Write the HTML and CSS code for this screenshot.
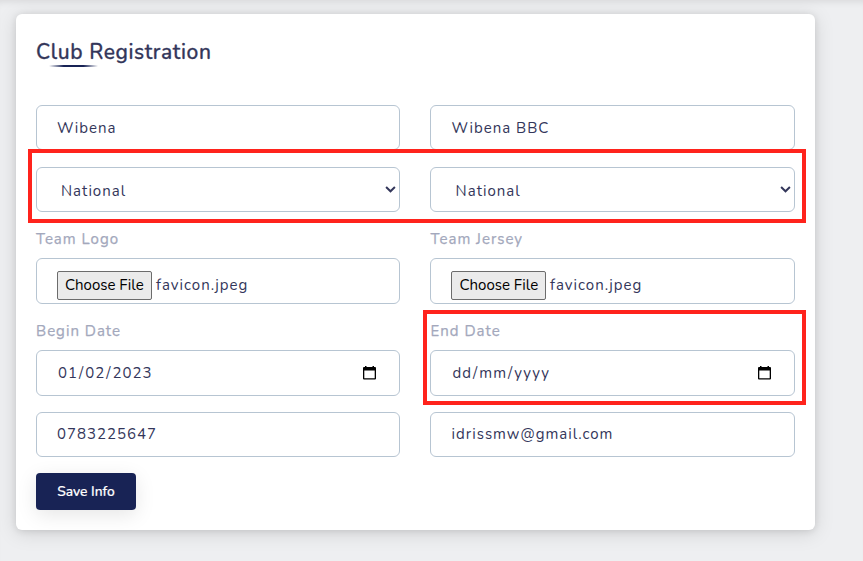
FILE: index.html
```html
<!DOCTYPE html>
<html lang="en">
<head>
<meta charset="utf-8">
<title>Club Registration</title>
<link rel="stylesheet" href="styles.css">
</head>
<body>
<main class="card">
  <h1 class="title">Club Registration</h1>
  <form class="form">
    <div class="row names">
      <div class="field">Wibena</div>
      <div class="field">Wibena BBC</div>
    </div>
    <div class="row selects">
      <div class="field select"><span>National</span><svg class="chevron" viewBox="0 0 10 6"><path d="M1 .8 5 4.6 9 .8"/></svg></div>
      <div class="field select"><span>National</span><svg class="chevron" viewBox="0 0 10 6"><path d="M1 .8 5 4.6 9 .8"/></svg></div>
      <i class="mark mark-selects"></i>
    </div>
    <div class="row group">
      <div>
        <div class="label">Team Logo</div>
        <div class="field tall file"><span class="choose">Choose File</span><span>favicon.jpeg</span></div>
      </div>
      <div class="right">
        <div class="label">Team Jersey</div>
        <div class="field tall file"><span class="choose">Choose File</span><span>favicon.jpeg</span></div>
      </div>
    </div>
    <div class="row group">
      <div>
        <div class="label">Begin Date</div>
        <div class="field tall date"><span>01<b>/</b>02<b>/</b>2023</span><svg class="calendar" viewBox="0 0 13 14"><path fill-rule="evenodd" d="M2 0h1.5v1h6V0H11v1h1q1 0 1 1v10.5q0 1-1 1H1q-1 0-1-1V2q0-1 1-1h1zM1.3 4.5v7.7h10.4V4.5z"/></svg></div>
      </div>
      <div class="right end">
        <div class="label">End Date</div>
        <div class="field tall date"><span>dd<b>/</b>mm<b>/</b>yyyy</span><svg class="calendar" viewBox="0 0 13 14"><path fill-rule="evenodd" d="M2 0h1.5v1h6V0H11v1h1q1 0 1 1v10.5q0 1-1 1H1q-1 0-1-1V2q0-1 1-1h1zM1.3 4.5v7.7h10.4V4.5z"/></svg></div>
        <i class="mark mark-end"></i>
      </div>
    </div>
    <div class="row contact">
      <div class="field">0783225647</div>
      <div class="field">idrissmw@gmail.com</div>
    </div>
    <button class="save" type="button">Save Info</button>
  </form>
</main>
</body>
</html>
```
FILE: styles.css
```css
* { box-sizing: border-box; }
body {
  margin: 0;
  padding: 14px 48px 31px 16px;
  height: 561px;
  overflow: hidden;
  background: #eeeff1;
  box-shadow: inset 0 7px 7px -5px rgba(0, 0, 0, .09);
  font-family: Nunito, Lato, sans-serif;
  color: #33365a;
}
.card {
  height: 516px;
  padding: 20px;
  border-radius: 6px;
  background: #fff;
  box-shadow: 0 3px 20px rgba(0, 0, 0, .13), 0 1px 7px rgba(0, 0, 0, .1);
}
.title {
  position: relative;
  height: 35px;
  margin: 0 0 36px;
  font-size: 21px;
  font-weight: 500;
  line-height: 36px;
  letter-spacing: .6px;
  -webkit-text-stroke: .3px currentColor;
}
.title::after {
  content: "";
  position: absolute;
  left: 13px;
  top: 31px;
  width: 49px;
  height: 2px;
  background: linear-gradient(90deg, transparent, #182355 30%, #182355 70%, transparent);
}
.row {
  position: relative;
  display: grid;
  grid-template-columns: 364px 365px;
  gap: 30px;
}
.field {
  display: flex;
  align-items: center;
  height: 45px;
  padding: 0 20px;
  border: 1px solid #b7c5d2;
  border-radius: 6px;
  font-size: 15px;
  line-height: 20px;
  letter-spacing: 1px;
  white-space: nowrap;
}
.field + .field, .right .label, .right .date { text-indent: .6px; }
.tall { height: 46px; }
.selects { margin-top: 17px; }
.select { padding: 2px 3px 0 24px; justify-content: space-between; }
.chevron {
  width: 11px;
  height: 7px;
  margin-top: -3px;
  fill: none;
  stroke: #33365a;
  stroke-width: 1.8;
}
.group { padding-top: 17px; }
.label {
  height: 29px;
  font-size: 15px;
  line-height: 20px;
  letter-spacing: 1px;
  color: #a3a8bc;
  -webkit-text-stroke: .25px currentColor;
}
.file { padding-top: 8px; gap: 4px; }
.file > span:last-child { margin-top: -1px; }
.choose {
  width: 95px;
  height: 29px;
  padding-left: 7px;
  border: 1px solid #6c6c6c;
  border-radius: 2px;
  background: #ebebeb;
  color: #000;
  line-height: 26px;
  letter-spacing: 0;
}
.right .choose { padding-left: 7.5px; }
.date { padding-left: 21px; padding-right: 23px; justify-content: space-between; }
.date b { margin: 0 1px; font-weight: 400; }
.calendar { width: 13px; height: 14px; fill: #000; }
.end { position: relative; }
.contact { margin-top: 16px; }
.contact .field { padding-bottom: 2px; }
.mark { position: absolute; border: 4px solid #ff231c; }
.mark-selects { left: -8px; right: -11px; top: -18px; height: 74px; }
.mark-end { left: -7px; right: -11px; top: -11px; height: 95px; }
.save {
  display: block;
  width: 100px;
  height: 37px;
  margin-top: 16px;
  padding: 0;
  border: 0;
  border-radius: 4px;
  background: #182355;
  color: #fff;
  font: 500 13.8px/37px Nunito, Lato, sans-serif;
  -webkit-text-stroke: .2px currentColor;
  box-shadow: 0 5px 20px rgba(0, 0, 0, .1);
}
```
